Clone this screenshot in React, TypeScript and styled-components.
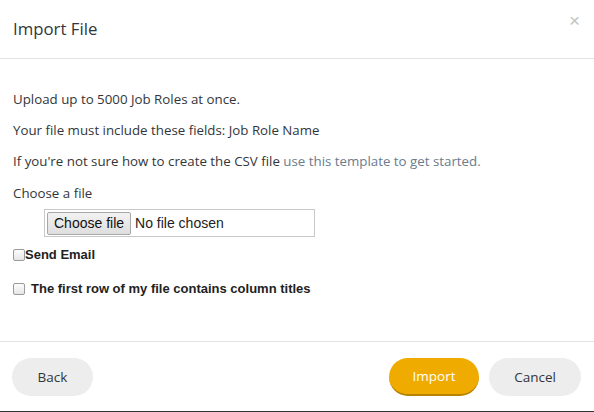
import React, { useState } from 'react';
import styled, { createGlobalStyle } from 'styled-components';

const GlobalStyle = createGlobalStyle`
  html, body {
    margin: 0;
    padding: 0;
    background: #fff;
  }
  body {
    font-family: "Open Sans", "Liberation Sans", sans-serif;
    color: #32363a;
  }
`;

const Modal = styled.div`
  width: 594px;
  height: 412px;
  box-sizing: border-box;
  display: flex;
  flex-direction: column;
  border-bottom: 1px solid #333;
  background: #fff;
`;

const Header = styled.div`
  height: 59px;
  box-sizing: border-box;
  display: flex;
  align-items: center;
  justify-content: space-between;
  padding: 0 13px 2px 13px;
  border-bottom: 1px solid #e3e3e3;
`;

const Title = styled.h1`
  margin: 0;
  font-size: 16.8px;
  font-weight: 400;
  color: #32363a;
`;

const Close = styled.button`
  border: none;
  background: none;
  padding: 0;
  margin-top: -16px;
  margin-right: 1px;
  color: #c4c4c4;
  font-size: 19px;
  line-height: 1;
  cursor: pointer;
  font-family: "Liberation Sans", sans-serif;
`;

const Body = styled.div`
  flex: 1;
  padding: 30px 13px 0 13px;
  display: flex;
  flex-direction: column;
  font-size: 13.3px;
  color: #32363a;
`;

const Line = styled.p<{ $bottom?: number }>`
  margin: 0 0 ${(p) => p.$bottom ?? 11}px 0;
  line-height: 20px;
`;

const Link = styled.a`
  color: #6a7b8c;
  text-decoration: none;
`;

const FileBox = styled.div`
  margin: 0 0 10px 31px;
  width: 271px;
  height: 28px;
  box-sizing: border-box;
  border: 1px solid #c8c8c8;
  display: flex;
  align-items: center;
  padding-left: 2px;
  font-family: "Liberation Sans", Arial, sans-serif;
  font-size: 14px;
  color: #222;
`;

const ChooseButton = styled.button`
  height: 23px;
  padding: 0 6px;
  border: 1px solid #a8a8a8;
  border-radius: 2px;
  background: linear-gradient(#f2f2f2, #dedede);
  font-family: "Liberation Sans", Arial, sans-serif;
  font-size: 14px;
  color: #111;
  margin-right: 4px;
`;

const CheckRow = styled.label<{ $gap: number; $bottom: number }>`
  display: flex;
  align-items: center;
  gap: ${(p) => p.$gap}px;
  margin-bottom: ${(p) => p.$bottom}px;
  font-family: "Liberation Sans", Arial, sans-serif;
  font-weight: 700;
  font-size: 13px;
  color: #222;
  line-height: 16px;
`;

const Check = styled.input`
  appearance: none;
  margin: 0;
  width: 12px;
  height: 12px;
  border: 1px solid #9a9a9a;
  border-radius: 2px;
  background: linear-gradient(#fcfcfc, #e6e6e6);
  &:checked {
    background: #5b9bd5;
  }
`;

const Footer = styled.div`
  height: 70px;
  box-sizing: border-box;
  border-top: 1px solid #e3e3e3;
  display: flex;
  align-items: center;
  padding: 1px 13px 0 12px;
  gap: 10px;
`;

const Spacer = styled.div`
  flex: 1;
`;

const Button = styled.button<{ $primary?: boolean; $width: number }>`
  width: ${(p) => p.$width}px;
  height: 38px;
  box-sizing: border-box;
  border: none;
  border-radius: 19px;
  font-family: "Open Sans", "Liberation Sans", sans-serif;
  font-size: 13.5px;
  cursor: pointer;
  background: ${(p) => (p.$primary ? '#f0ab00' : '#ededed')};
  color: ${(p) => (p.$primary ? '#fff' : '#32363a')};
  border-bottom: ${(p) => (p.$primary ? '2px solid #b88400' : 'none')};
`;

const App: React.FC = () => {
  const [sendEmail, setSendEmail] = useState(false);
  const [hasTitles, setHasTitles] = useState(false);

  return (
    <Modal>
      <GlobalStyle />
      <Header>
        <Title>Import File</Title>
        <Close aria-label="Close">×</Close>
      </Header>
      <Body>
        <Line>Upload up to 5000 Job Roles at once.</Line>
        <Line>Your file must include these fields: Job Role Name</Line>
        <Line $bottom={12}>
          If you're not sure how to create the CSV file{' '}
          <Link href="#">use this template to get started.</Link>
        </Line>
        <Line $bottom={6}>Choose a file</Line>
        <FileBox>
          <ChooseButton>Choose file</ChooseButton>
          No file chosen
        </FileBox>
        <CheckRow $gap={0} $bottom={18}>
          <Check type="checkbox" checked={sendEmail} onChange={(e) => setSendEmail(e.target.checked)} />
          Send Email
        </CheckRow>
        <CheckRow $gap={6} $bottom={0}>
          <Check type="checkbox" checked={hasTitles} onChange={(e) => setHasTitles(e.target.checked)} />
          The first row of my file contains column titles
        </CheckRow>
      </Body>
      <Footer>
        <Button $width={81}>Back</Button>
        <Spacer />
        <Button $primary $width={90}>Import</Button>
        <Button $width={92}>Cancel</Button>
      </Footer>
    </Modal>
  );
};

export default App;
